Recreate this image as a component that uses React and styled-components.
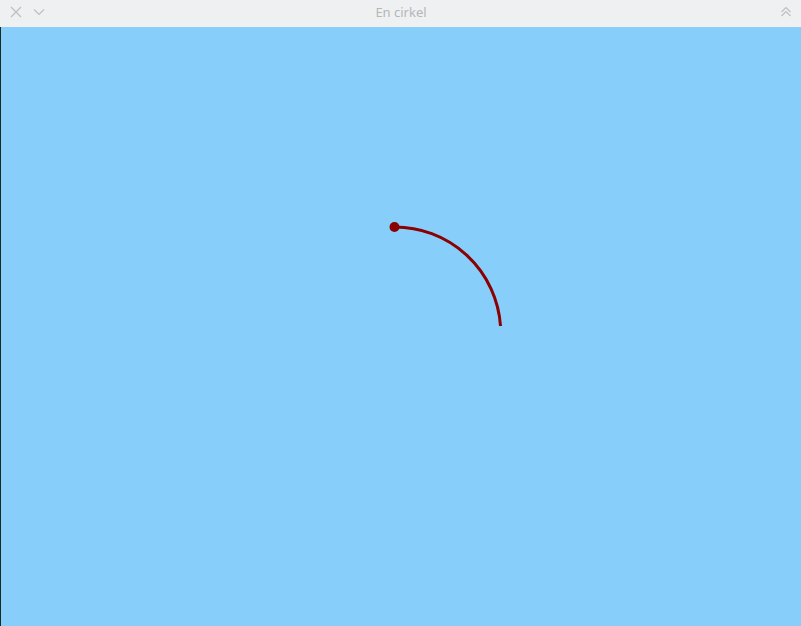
import styled, { createGlobalStyle } from "styled-components"

const GlobalStyle = createGlobalStyle`
  html, body {
    margin: 0;
    padding: 0;
    overflow: hidden;
  }
  body {
    font-family: "Noto Sans", "DejaVu Sans", sans-serif;
  }
`

const Window = styled.div`
  display: flex;
  flex-direction: column;
  width: 801px;
  height: 626px;
`

const TitleBar = styled.div`
  display: flex;
  align-items: center;
  height: 27px;
  padding: 0 8px 3px;
  background-color: #eff0f1;
  box-sizing: border-box;
`

const Controls = styled.div`
  display: flex;
  align-items: center;
  gap: 7px;
  width: 80px;
`

const Title = styled.div`
  flex: 1;
  text-align: center;
  color: #b4b6b8;
  font-size: 13px;
`

const RightControls = styled(Controls)`
  justify-content: flex-end;
  margin-right: -1px;
`

const IconButton = styled.div`
  display: grid;
  place-items: center;
  width: 16px;
  height: 16px;
`

const Canvas = styled.div`
  flex: 1;
  background-color: #87cefa;
  border-left: 1px solid #1c2a22;
`

const Drawing = styled.svg`
  display: block;
`

const Icon = ({ d }) => (
  <svg width="14" height="14" viewBox="0 0 14 14">
    <path d={d} fill="none" stroke="#bdbfc1" strokeWidth="1.2" />
  </svg>
)

export default function App() {
  return (
    <>
      <GlobalStyle />
      <Window>
        <TitleBar>
          <Controls>
            <IconButton>
              <Icon d="M2 2 L12 12 M12 2 L2 12" />
            </IconButton>
            <IconButton>
              <Icon d="M2 4.5 L7 9.5 L12 4.5" />
            </IconButton>
          </Controls>
          <Title>En cirkel</Title>
          <RightControls>
            <IconButton>
              <Icon d="M2.5 7 L7 2.5 L11.5 7 M2.5 11 L7 6.5 L11.5 11" />
            </IconButton>
          </RightControls>
        </TitleBar>
        <Canvas>
          <Drawing width="800" height="599" viewBox="1 27 800 599">
            <path
              d="M394 227 A 106 106 0 0 1 500.5 326"
              fill="none"
              stroke="#8b0000"
              strokeWidth="3"
            />
            <circle cx="394.5" cy="227" r="5" fill="#8b0000" />
          </Drawing>
        </Canvas>
      </Window>
    </>
  )
}
